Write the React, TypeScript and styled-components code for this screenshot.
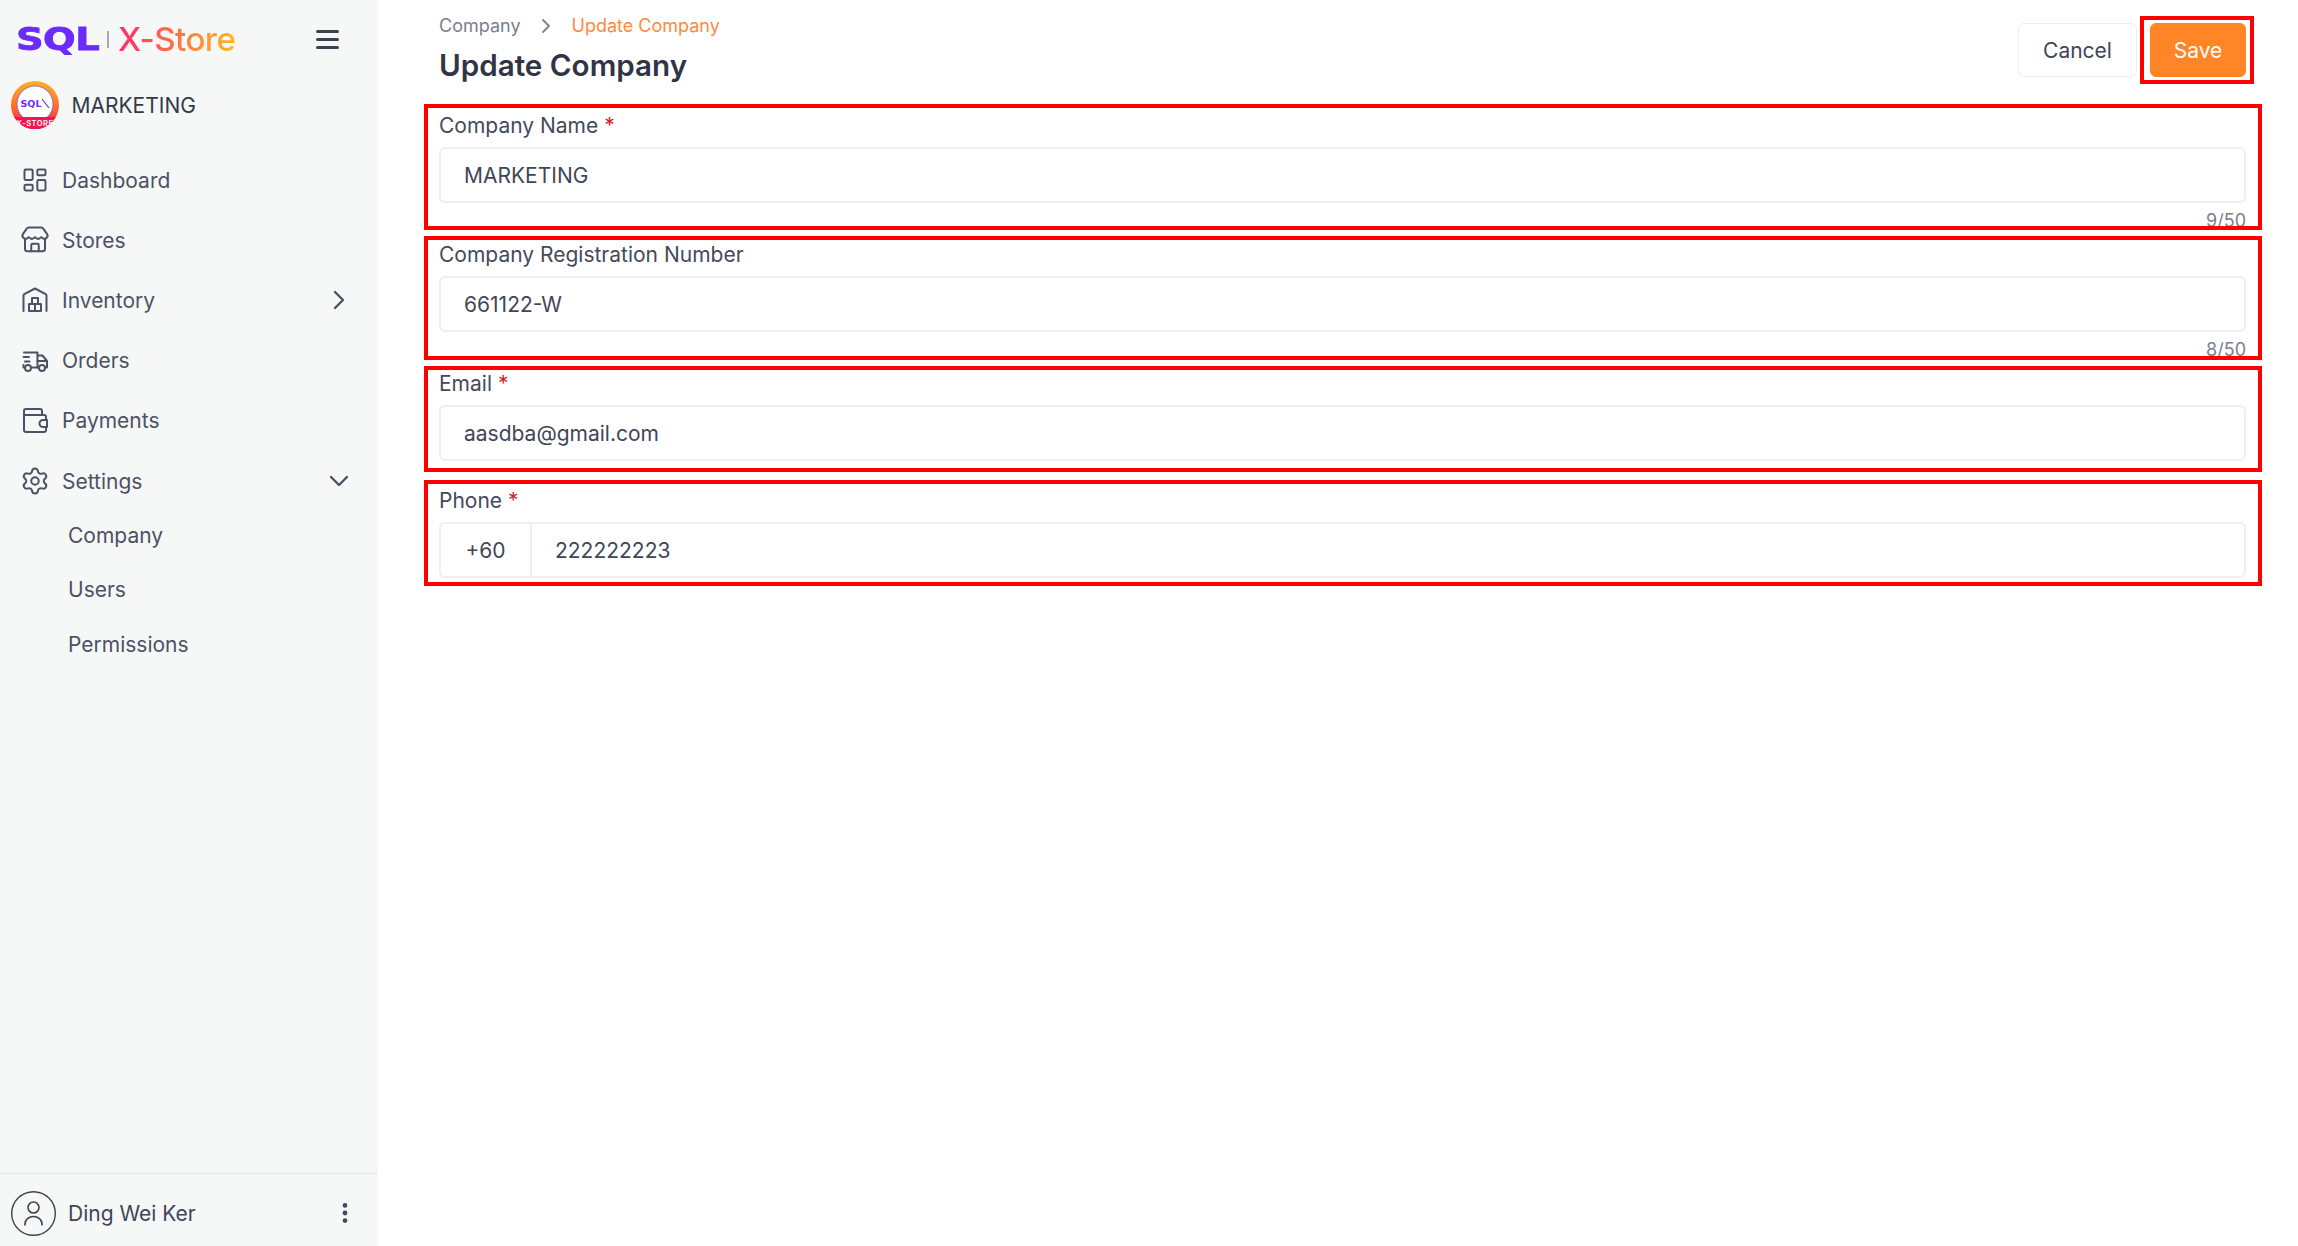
import React from "react";
import styled, { createGlobalStyle } from "styled-components";
import { LayoutDashboard, Store, ChevronRight, ChevronDown, Settings, EllipsisVertical } from "lucide-react";

const Global = createGlobalStyle`
  html, body { margin: 0; padding: 0; height: 100%; background: #fff; }
  body { font-family: Inter, "Noto Sans", sans-serif; color: #3a4150; overflow: hidden; }
  * { box-sizing: border-box; }
`;

const Page = styled.div`
  display: flex;
  width: 2298px;
  height: 1246px;
  overflow: hidden;
`;

const Sidebar = styled.aside`
  width: 378px;
  flex: none;
  background: #f6f8f8;
  display: flex;
  flex-direction: column;
`;

const BrandRow = styled.div`
  height: 78px;
  display: flex;
  align-items: center;
  padding: 0 39px 0 16px;
  justify-content: space-between;
`;

const Logo = styled.div`
  display: flex;
  align-items: center;
  height: 30px;
`;

const LogoSql = styled.span`
  font-family: "DejaVu Sans", sans-serif;
  font-weight: 700;
  font-size: 31.5px;
  line-height: 30px;
  color: #6a2bfb;
  display: inline-block;
  width: 83px;
  letter-spacing: -0.5px;
  -webkit-text-stroke: 0.8px #6a2bfb;
  transform: scaleX(1.22);
  transform-origin: left center;
`;

const LogoSep = styled.span`
  width: 2px;
  height: 17px;
  background: #a9abb0;
  margin: 0 9px 0 8px;
`;

const LogoStore = styled.span`
  font-size: 33.2px;
  font-weight: 500;
  letter-spacing: -0.6px;
  background: linear-gradient(90deg, #ff2a6d 0%, #ff6d48 45%, #ffb81f 100%);
  -webkit-background-clip: text;
  background-clip: text;
  color: transparent;
`;

const MenuBtn = styled.div`
  display: flex;
  width: 23px;
  height: 19px;
  flex-direction: column;
  justify-content: space-between;
`;

const MenuLine = styled.span`
  height: 3px;
  border-radius: 2px;
  background: #3f4350;
`;

const CompanyRow = styled.div`
  display: flex;
  align-items: center;
  gap: 12.5px;
  padding: 0 0 0 11px;
  height: 50px;
  margin-top: 2px;
  margin-bottom: 20px;
`;

const CompanyName = styled.span`
  font-size: 21px;
  color: #333a4b;
`;

const NavItem = styled.div`
  height: 60.2px;
  display: flex;
  align-items: center;
  padding: 0 23px 0 20px;
  gap: 12px;
  font-size: 21px;
  color: #4c5263;
`;

const IconSlot = styled.span`
  width: 30px;
  height: 30px;
  flex: none;
  display: flex;
  align-items: center;
  justify-content: center;
`;

const NavLabel = styled.span`
  flex: 1;
`;

const SubItem = styled.div`
  height: 54.4px;
  display: flex;
  align-items: center;
  padding-left: 68px;
  font-size: 21px;
  color: #4c5263;
`;

const SubList = styled.div`
  margin-top: -3px;
`;

const Spacer = styled.div`
  flex: 1;
`;

const UserRow = styled.div`
  height: 73px;
  border-top: 1px solid #e6e8e9;
  display: flex;
  align-items: center;
  padding: 6px 20px 0 11px;
  gap: 12px;
  font-size: 21px;
  color: #3f4658;
`;

const Main = styled.main`
  flex: 1;
  min-width: 0;
  padding: 0 36px 0 46px;
`;

const Header = styled.header`
  display: flex;
  justify-content: space-between;
  height: 104px;
  padding: 0 16px 0 15px;
`;

const HeaderText = styled.div`
  display: flex;
  flex-direction: column;
  padding-top: 14px;
`;

const Crumbs = styled.div`
  display: flex;
  align-items: center;
  font-size: 18px;
  line-height: 24px;
  color: #7b808c;
  gap: 13.5px;
`;

const CrumbActive = styled.span`
  color: #ff8a3c;
`;

const Title = styled.h1`
  margin: 9px 0 0;
  font-size: 29.6px;
  line-height: 36px;
  font-weight: 600;
  color: #2f3545;
`;

const Actions = styled.div`
  display: flex;
  align-items: flex-start;
  gap: 13px;
  padding-top: 23px;
`;

const Button = styled.button<{ $primary?: boolean }>`
  height: 54px;
  width: ${(p) => (p.$primary ? "96px" : "119px")};
  border-radius: 6px;
  font-family: inherit;
  font-size: 21px;
  border: 1px solid ${(p) => (p.$primary ? "#ff8526" : "#eeeff0")};
  background: ${(p) => (p.$primary ? "#ff8526" : "#fff")};
  color: ${(p) => (p.$primary ? "#fff" : "#3f4658")};
  position: relative;
`;

const Highlight = styled.span`
  position: absolute;
  inset: -8px -9px -8px -11px;
  border: 4px solid #fe0000;
  pointer-events: none;
`;

const Field = styled.section<{ $h: number; $gap: number }>`
  position: relative;
  height: ${(p) => p.$h}px;
  margin-bottom: ${(p) => p.$gap}px;
  padding: 0 16px 0 15px;
  &::after {
    content: "";
    position: absolute;
    inset: 0;
    border: 4px solid #fe0000;
    pointer-events: none;
  }
`;

const Label = styled.label<{ $h: number }>`
  display: block;
  font-size: 21px;
  line-height: 26px;
  height: ${(p) => p.$h}px;
  padding-top: ${(p) => p.$h - 34}px;
  color: #444a5a;
`;

const Req = styled.span`
  color: #c8242b;
`;

const InputBox = styled.div`
  display: flex;
  height: 56px;
  border: 2px solid #eeeff0;
  border-radius: 6px;
  background: #fff;
  align-items: center;
  font-size: 21px;
  color: #3f4658;
`;

const Prefix = styled.span`
  width: 91px;
  height: 100%;
  flex: none;
  display: flex;
  align-items: center;
  justify-content: center;
  border-right: 2px solid #eeeff0;
`;

const Value = styled.span`
  padding-left: 23px;
`;

const Counter = styled.div`
  text-align: right;
  font-size: 18px;
  line-height: 20px;
  margin-top: 8px;
  color: #7b808c;
`;

const WarehouseIcon = () => (
  <svg width="26" height="26" viewBox="0 0 26 26" fill="none" stroke="currentColor" strokeWidth="2" strokeLinecap="round" strokeLinejoin="round">
    <path d="M1.500 24V8.500a1.500 1.500 0 0 1 .8-1.300L13 1.500l10.700 5.700a1.500 1.500 0 0 1 .8 1.300V24" />
    <path d="M7 24v-7h6v7M13 24v-7h6v7M7 24h12M10 17v-6h6v6" />
  </svg>
);

const TruckIcon = () => (
  <svg width="26" height="26" viewBox="0 0 26 26" fill="none" stroke="currentColor" strokeWidth="2" strokeLinecap="round" strokeLinejoin="round">
    <path d="M2 4.500h13.500v15H10M1.500 9H7M3 13.500h4.500M1.500 17v2.500" />
    <path d="M15.500 7.500h5L25 13v6.500h-1.500M15.500 19.500H17M15.500 13H25" />
    <circle cx="6" cy="20" r="3" />
    <circle cx="20" cy="20" r="3" />
  </svg>
);

const WalletIcon = () => (
  <svg width="25" height="25" viewBox="0 0 25 25" fill="none" stroke="currentColor" strokeWidth="2" strokeLinecap="round" strokeLinejoin="round">
    <path d="M19 7V3a2 2 0 0 0-2-2H3a2 2 0 0 0-2 2v19a2 2 0 0 0 2 2h18a2 2 0 0 0 2-2v-3" />
    <path d="M1 7h20a2 2 0 0 1 2 2v3" />
    <path d="M24 12h-4a3.500 3.500 0 0 0 0 7h4z" />
  </svg>
);

const CompanyLogo = () => (
  <svg width="48" height="48" viewBox="0 0 48 48">
    <defs>
      <linearGradient id="ring" x1="0" y1="0" x2="0" y2="1">
        <stop offset="0" stopColor="#ffb31f" />
        <stop offset="0.55" stopColor="#ff6a2b" />
        <stop offset="1" stopColor="#f4174f" />
      </linearGradient>
    </defs>
    <circle cx="24" cy="24" r="24" fill="url(#ring)" />
    <circle cx="24" cy="23" r="18" fill="#fff" stroke="#7b5cc4" strokeWidth="0.8" />
    <text x="20" y="26" textAnchor="middle" fontFamily="DejaVu Sans" fontWeight="700" fontSize="9.500" fill="#6a2bfb">SQL</text>
    <path d="M31 18l7 9" stroke="#6a2bfb" strokeWidth="1.200" />
    <path d="M3 36h42a24 24 0 0 1-42 0z" fill="#f3154f" />
    <text x="24" y="45" textAnchor="middle" fontFamily="Inter" fontWeight="600" fontSize="7.500" letterSpacing="0.500" fill="#fff">X-STORE</text>
  </svg>
);

const UserAvatar = () => (
  <svg width="45" height="45" viewBox="0 0 45 45" fill="none" stroke="#3f4350" strokeWidth="1.400" strokeLinecap="round">
    <circle cx="22.500" cy="22.500" r="21.800" />
    <circle cx="22.500" cy="16.500" r="5.500" strokeWidth="1.600" />
    <path d="M14 34v-1a8.500 7.500 0 0 1 17 0v1" strokeWidth="1.600" />
  </svg>
);

export default function App() {
  return (
    <Page>
      <Global />
      <Sidebar>
        <BrandRow>
          <Logo>
            <LogoSql>SQL</LogoSql>
            <LogoSep />
            <LogoStore>X-Store</LogoStore>
          </Logo>
          <MenuBtn>
            <MenuLine />
            <MenuLine />
            <MenuLine />
          </MenuBtn>
        </BrandRow>
        <CompanyRow>
          <CompanyLogo />
          <CompanyName>MARKETING</CompanyName>
        </CompanyRow>
        <NavItem>
          <IconSlot><LayoutDashboard size={28} strokeWidth={1.7} /></IconSlot>
          <NavLabel>Dashboard</NavLabel>
        </NavItem>
        <NavItem>
          <IconSlot><Store size={30} strokeWidth={1.6} /></IconSlot>
          <NavLabel>Stores</NavLabel>
        </NavItem>
        <NavItem>
          <IconSlot><WarehouseIcon /></IconSlot>
          <NavLabel>Inventory</NavLabel>
          <ChevronRight size={32} strokeWidth={1.8} />
        </NavItem>
        <NavItem>
          <IconSlot><TruckIcon /></IconSlot>
          <NavLabel>Orders</NavLabel>
        </NavItem>
        <NavItem>
          <IconSlot><WalletIcon /></IconSlot>
          <NavLabel>Payments</NavLabel>
        </NavItem>
        <NavItem>
          <IconSlot><Settings size={30} strokeWidth={1.6} /></IconSlot>
          <NavLabel>Settings</NavLabel>
          <ChevronDown size={32} strokeWidth={1.8} />
        </NavItem>
        <SubList>
          <SubItem>Company</SubItem>
          <SubItem>Users</SubItem>
          <SubItem>Permissions</SubItem>
        </SubList>
        <Spacer />
        <UserRow>
          <UserAvatar />
          <NavLabel>Ding Wei Ker</NavLabel>
          <EllipsisVertical size={26} strokeWidth={2.4} />
        </UserRow>
      </Sidebar>
      <Main>
        <Header>
          <HeaderText>
            <Crumbs>
              <span>Company</span>
              <ChevronRight size={24} strokeWidth={1.8} />
              <CrumbActive>Update Company</CrumbActive>
            </Crumbs>
            <Title>Update Company</Title>
          </HeaderText>
          <Actions>
            <Button>Cancel</Button>
            <Button $primary>
              Save
              <Highlight />
            </Button>
          </Actions>
        </Header>
        <Field $h={126} $gap={6}>
          <Label $h={43}>
            Company Name <Req>*</Req>
          </Label>
          <InputBox>
            <Value>MARKETING</Value>
          </InputBox>
          <Counter>9/50</Counter>
        </Field>
        <Field $h={124} $gap={6}>
          <Label $h={40}>Company Registration Number</Label>
          <InputBox>
            <Value>661122-W</Value>
          </InputBox>
          <Counter>8/50</Counter>
        </Field>
        <Field $h={106} $gap={8}>
          <Label $h={39}>
            Email <Req>*</Req>
          </Label>
          <InputBox>
            <Value>aasdba@gmail.com</Value>
          </InputBox>
        </Field>
        <Field $h={106} $gap={0}>
          <Label $h={42}>
            Phone <Req>*</Req>
          </Label>
          <InputBox>
            <Prefix>+60</Prefix>
            <Value>222222223</Value>
          </InputBox>
        </Field>
      </Main>
    </Page>
  );
}
